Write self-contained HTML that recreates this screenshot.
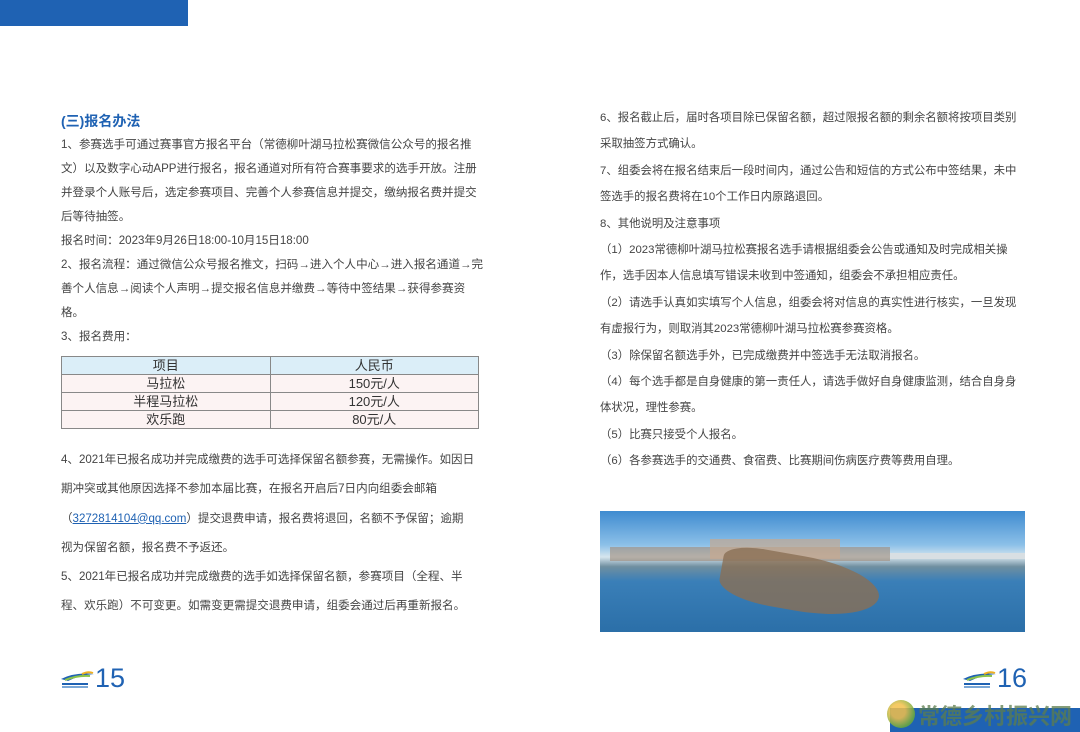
<!DOCTYPE html>
<html><head><meta charset="utf-8"><style>
body{margin:0;width:1080px;height:732px;background:#fff;position:relative;overflow:hidden;font-family:"Liberation Sans","Noto Sans CJK SC",sans-serif;color:#444;font-size:11.55px}
.a{position:absolute;white-space:nowrap}
.l{position:absolute;left:61px;line-height:24px}
.r{position:absolute;left:600px;line-height:26.4px;font-size:11.4px}
table{position:absolute;left:61px;top:356px;width:418px;border-collapse:collapse;font-size:13px;color:#333}
td{border:1px solid #888;text-align:center;height:17px;padding:0;line-height:17px}
</style></head><body>
<div class="a" style="left:0;top:0;width:188px;height:26px;background:#1f62b3"></div>
<div class="a" style="left:61px;top:111px;font-size:14px;font-weight:bold;color:#1f62b3">(三)报名办法</div>
<div class="l" style="top:133px">1、参赛选手可通过赛事官方报名平台（常德柳叶湖马拉松赛微信公众号的报名推<br>文）以及数字心动APP进行报名，报名通道对所有符合赛事要求的选手开放。注册<br>并登录个人账号后，选定参赛项目、完善个人参赛信息并提交，缴纳报名费并提交<br>后等待抽签。<br>报名时间：2023年9月26日18:00-10月15日18:00<br>2、报名流程：通过微信公众号报名推文，扫码→进入个人中心→进入报名通道→完<br>善个人信息→阅读个人声明→提交报名信息并缴费→等待中签结果→获得参赛资<br>格。<br>3、报名费用：</div>
<table>
<tr style="background:#dbeef8"><td style="width:50%">项目</td><td>人民币</td></tr>
<tr style="background:#fcf3f3"><td>马拉松</td><td>150元/人</td></tr>
<tr style="background:#fcf3f3"><td>半程马拉松</td><td>120元/人</td></tr>
<tr style="background:#fcf3f3"><td>欢乐跑</td><td>80元/人</td></tr>
</table>
<div class="l" style="top:446px;line-height:29.3px">4、2021年已报名成功并完成缴费的选手可选择保留名额参赛，无需操作。如因日<br>期冲突或其他原因选择不参加本届比赛，在报名开启后7日内向组委会邮箱<br>（<span style="color:#1f62b3;text-decoration:underline">3272814104@qq.com</span>）提交退费申请，报名费将退回，名额不予保留；逾期<br>视为保留名额，报名费不予返还。<br>5、2021年已报名成功并完成缴费的选手如选择保留名额，参赛项目（全程、半<br>程、欢乐跑）不可变更。如需变更需提交退费申请，组委会通过后再重新报名。</div>
<div class="r" style="top:105px">6、报名截止后，届时各项目除已保留名额，超过限报名额的剩余名额将按项目类别<br>采取抽签方式确认。<br>7、组委会将在报名结束后一段时间内，通过公告和短信的方式公布中签结果，未中<br>签选手的报名费将在10个工作日内原路退回。<br>8、其他说明及注意事项<br>（1）2023常德柳叶湖马拉松赛报名选手请根据组委会公告或通知及时完成相关操<br>作，选手因本人信息填写错误未收到中签通知，组委会不承担相应责任。<br>（2）请选手认真如实填写个人信息，组委会将对信息的真实性进行核实，一旦发现<br>有虚报行为，则取消其2023常德柳叶湖马拉松赛参赛资格。<br>（3）除保留名额选手外，已完成缴费并中签选手无法取消报名。<br>（4）每个选手都是自身健康的第一责任人，请选手做好自身健康监测，结合自身身<br>体状况，理性参赛。<br>（5）比赛只接受个人报名。<br>（6）各参赛选手的交通费、食宿费、比赛期间伤病医疗费等费用自理。</div>
<div class="a" style="left:600px;top:511px;width:425px;height:121px;background:linear-gradient(#3f8bd0 0%,#8cc0e8 28%,#d6e6ee 38%,#6f8fa0 46%,#3a7fb8 58%,#2b6fa8 100%);overflow:hidden">
<div class="a" style="left:10px;top:36px;width:280px;height:14px;background:#a08a78;opacity:.6"></div>
<div class="a" style="left:110px;top:28px;width:130px;height:20px;background:#c4a890;opacity:.7"></div>
<div class="a" style="left:120px;top:45px;width:160px;height:55px;background:#8a6f55;opacity:.8;border-radius:30% 60% 60% 40%;transform:rotate(10deg)"></div>
<div class="a" style="left:290px;top:42px;width:135px;height:6px;background:#d8dfe3"></div>
</div>
<svg class="a" style="left:60px;top:670px" width="36" height="20"><path d="M1 9 Q15 2 34 4 Q20 5 8 11Z" fill="#1f62b3"/><path d="M5 10 Q18 5 30 6" stroke="#8bc34a" stroke-width="2" fill="none"/><path d="M22 4 Q28 1 33 3" stroke="#f0b020" stroke-width="2" fill="none"/><rect x="2" y="13" width="26" height="2" fill="#1f62b3"/><rect x="2" y="16" width="26" height="2" fill="#7aa7d6"/></svg>
<div class="a" style="left:95px;top:663px;font-size:27px;color:#1f62b3">15</div>
<svg class="a" style="left:962px;top:670px" width="36" height="20"><path d="M1 9 Q15 2 34 4 Q20 5 8 11Z" fill="#1f62b3"/><path d="M5 10 Q18 5 30 6" stroke="#8bc34a" stroke-width="2" fill="none"/><path d="M22 4 Q28 1 33 3" stroke="#f0b020" stroke-width="2" fill="none"/><rect x="2" y="13" width="26" height="2" fill="#1f62b3"/><rect x="2" y="16" width="26" height="2" fill="#7aa7d6"/></svg>
<div class="a" style="left:997px;top:663px;font-size:27px;color:#1f62b3">16</div>
<div class="a" style="left:890px;top:708px;width:190px;height:24px;background:#1f62b3"></div>
<div class="a" style="left:887px;top:700px;width:28px;height:28px;border-radius:50%;background:radial-gradient(circle at 40% 40%,#f3c04a 30%,#6aaa3a 70%);opacity:.85"></div>
<div class="a" style="left:918px;top:699px;font-size:22px;font-weight:bold;color:#5d7d4d;opacity:.75">常德乡村振兴网</div>
</body></html>
